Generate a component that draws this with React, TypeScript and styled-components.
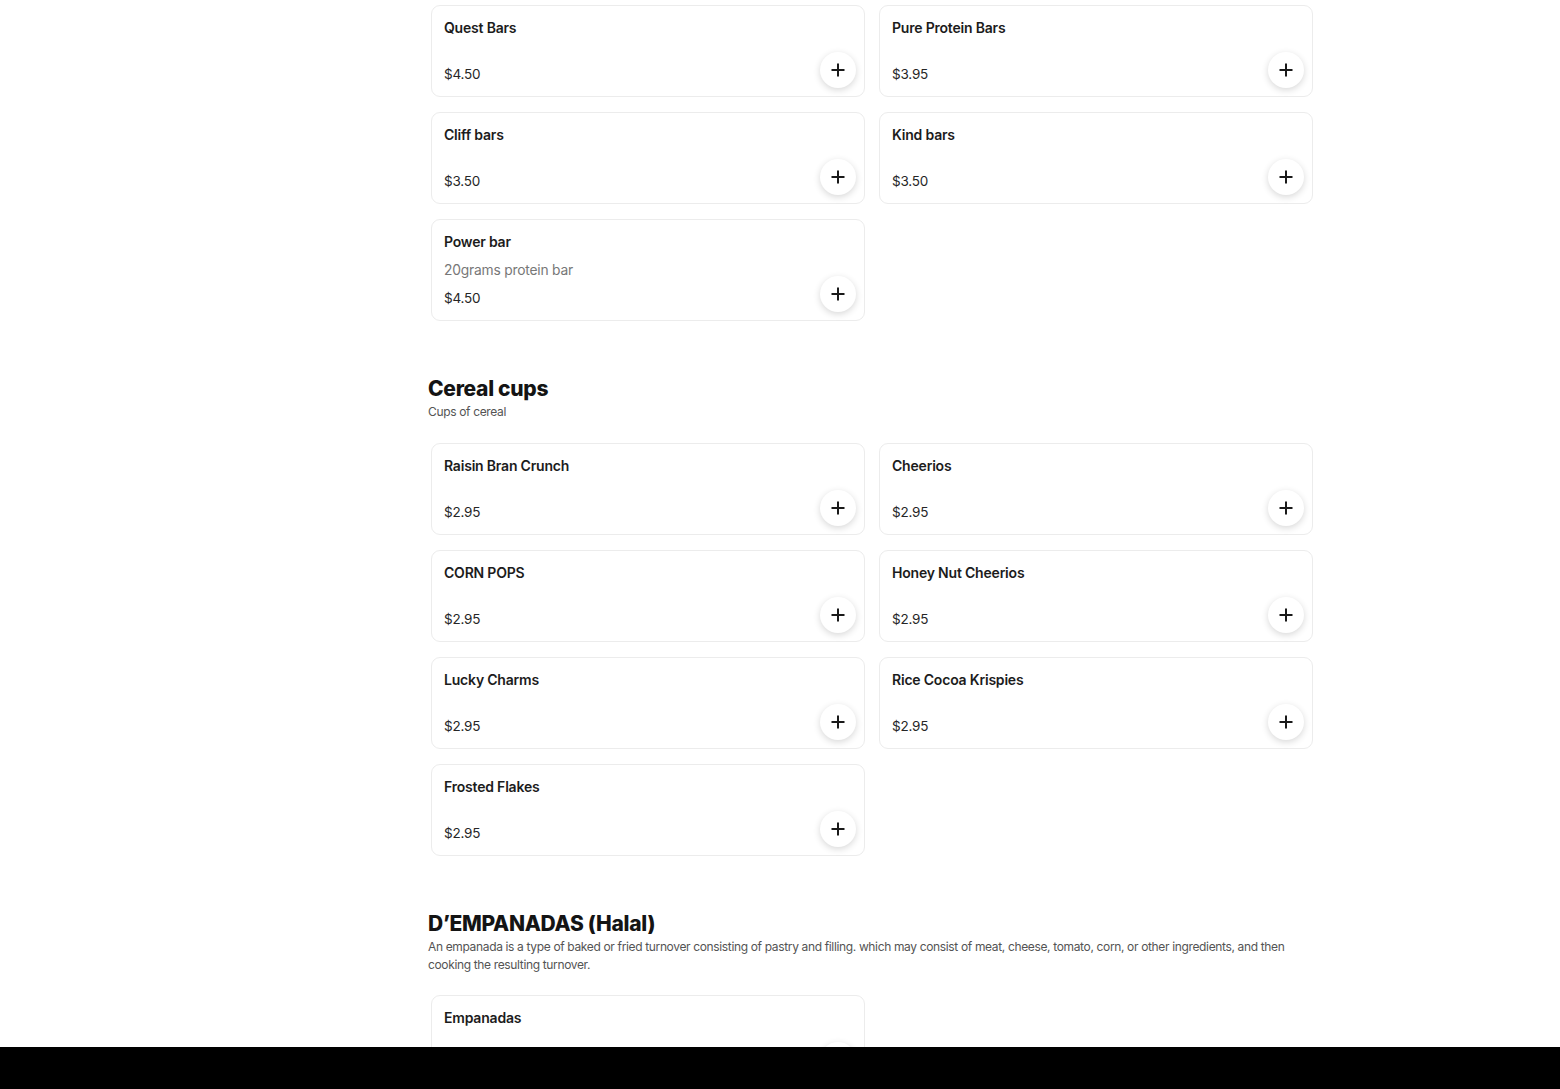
import React from "react";
import styled, { createGlobalStyle } from "styled-components";

const Global = createGlobalStyle`
  html, body { margin: 0; padding: 0; background: #ffffff; }
  body { font-family: Inter, "Noto Sans", sans-serif; color: #1a1a1a; }
  * { box-sizing: border-box; }
`;

const Page = styled.main`
  padding: 5px 0 60px 428px;
  width: 1316px;
`;

const Section = styled.section`
  display: flex;
  flex-direction: column;
  & + & { margin-top: 54px; }
`;

const Heading = styled.h2`
  margin: 0;
  font-size: 21px;
  line-height: 28px;
  font-weight: 800;
  letter-spacing: -0.3px;
  color: #141414;
`;

const SubText = styled.p`
  margin: 0;
  font-size: 12px;
  line-height: 18px;
  color: #545454;
  letter-spacing: -0.35px;
`;

const Grid = styled.div<{ $top: number }>`
  display: grid;
  grid-template-columns: 434px 434px;
  column-gap: 14px;
  row-gap: 15px;
  margin-top: ${(p) => p.$top}px;
  padding-left: 3px;
`;

const Card = styled.div`
  position: relative;
  display: flex;
  flex-direction: column;
  min-height: 92px;
  padding: 12px 12px 12px 12px;
  border: 1px solid #ececec;
  border-radius: 9px;
  background: #fff;
`;

const Title = styled.div`
  font-size: 14px;
  line-height: 20px;
  font-weight: 600;
  color: #1c1c1c;
  letter-spacing: -0.2px;
`;

const Desc = styled.div`
  margin-top: 8px;
  font-size: 13.8px;
  line-height: 20px;
  color: #777;
  letter-spacing: -0.2px;
`;

const Price = styled.div`
  margin-top: auto;
  padding-top: 8px;
  font-size: 13.5px;
  line-height: 20px;
  color: #262626;
  letter-spacing: -0.2px;
`;

const AddButton = styled.button`
  position: absolute;
  right: 8px;
  bottom: 8px;
  width: 36px;
  height: 36px;
  border-radius: 50%;
  border: none;
  background: #fff;
  box-shadow: 0 2px 7px rgba(0, 0, 0, 0.16);
  display: flex;
  align-items: center;
  justify-content: center;
  padding: 0;
  cursor: pointer;
`;

const BottomBar = styled.div`
  position: fixed;
  left: 0;
  right: 0;
  bottom: 0;
  height: 42px;
  background: #000;
`;

const Plus = () => (
  <svg width="16" height="16" viewBox="0 0 16 16" fill="none">
    <path d="M8 1.5v13M1.5 8h13" stroke="#1a1a1a" strokeWidth="2" />
  </svg>
);

type Item = { name: string; price: string; desc?: string };

const ItemCard = ({ item }: { item: Item }) => (
  <Card>
    <Title>{item.name}</Title>
    {item.desc && <Desc>{item.desc}</Desc>}
    <Price>{item.price}</Price>
    <AddButton aria-label="Add">
      <Plus />
    </AddButton>
  </Card>
);

const bars: Item[] = [
  { name: "Quest Bars", price: "$4.50" },
  { name: "Pure Protein Bars", price: "$3.95" },
  { name: "Cliff bars", price: "$3.50" },
  { name: "Kind bars", price: "$3.50" },
  { name: "Power bar", price: "$4.50", desc: "20grams protein bar" },
];

const cereal: Item[] = [
  { name: "Raisin Bran Crunch", price: "$2.95" },
  { name: "Cheerios", price: "$2.95" },
  { name: "CORN POPS", price: "$2.95" },
  { name: "Honey Nut Cheerios", price: "$2.95" },
  { name: "Lucky Charms", price: "$2.95" },
  { name: "Rice Cocoa Krispies", price: "$2.95" },
  { name: "Frosted Flakes", price: "$2.95" },
];

const empanadas: Item[] = [{ name: "Empanadas", price: "$4.00" }];

export default function App() {
  return (
    <>
      <Global />
      <Page>
        <Section>
          <Grid $top={0}>
            {bars.map((i) => (
              <ItemCard key={i.name} item={i} />
            ))}
          </Grid>
        </Section>
        <Section>
          <Heading>Cereal cups</Heading>
          <SubText>Cups of cereal</SubText>
          <Grid $top={22}>
            {cereal.map((i) => (
              <ItemCard key={i.name} item={i} />
            ))}
          </Grid>
        </Section>
        <Section>
          <Heading>D’EMPANADAS (Halal)</Heading>
          <SubText>
            An empanada is a type of baked or fried turnover consisting of pastry and filling. which may consist of
            meat, cheese, tomato, corn, or other ingredients, and then cooking the resulting turnover.
          </SubText>
          <Grid $top={21}>
            {empanadas.map((i) => (
              <ItemCard key={i.name} item={i} />
            ))}
          </Grid>
        </Section>
      </Page>
      <BottomBar />
    </>
  );
}
